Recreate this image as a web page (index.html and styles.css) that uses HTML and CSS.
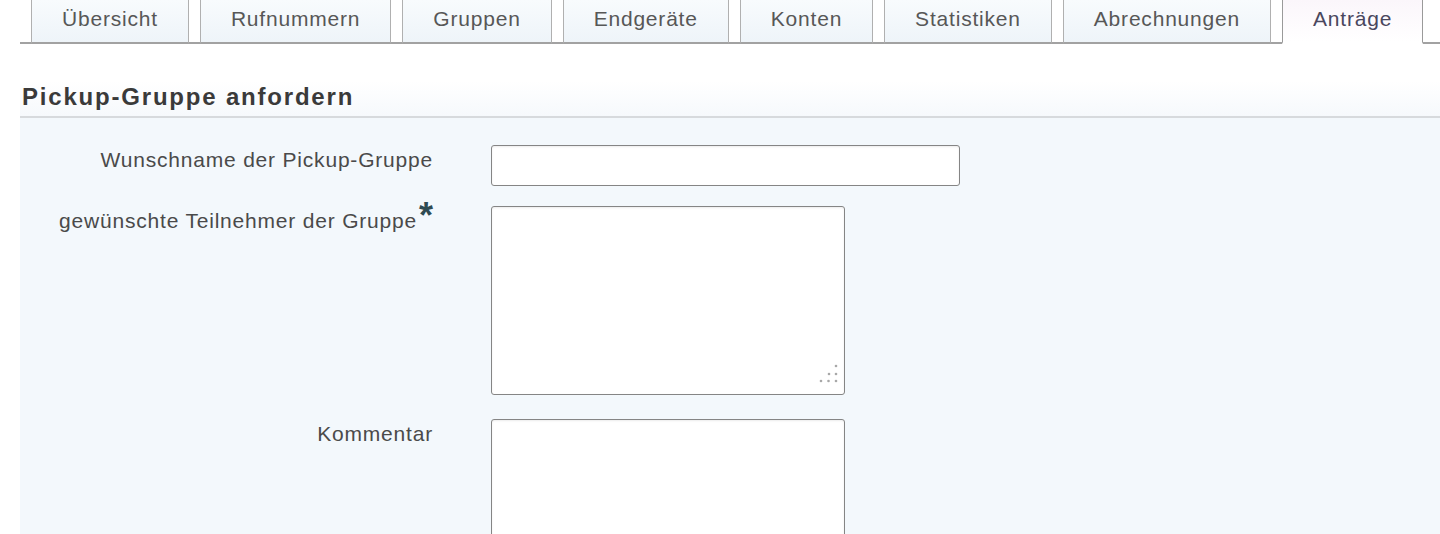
FILE: index.html
```html
<!DOCTYPE html>
<html lang="de">
<head>
<meta charset="utf-8">
<title>Pickup-Gruppe anfordern</title>
<link rel="stylesheet" href="styles.css">
</head>
<body>
<div class="page">
  <ul class="tabs">
    <li class="tab">Übersicht</li>
    <li class="tab">Rufnummern</li>
    <li class="tab">Gruppen</li>
    <li class="tab">Endgeräte</li>
    <li class="tab">Konten</li>
    <li class="tab">Statistiken</li>
    <li class="tab">Abrechnungen</li>
    <li class="tab active">Anträge</li>
  </ul>
  <h2 class="title">Pickup-Gruppe anfordern</h2>
  <form class="panel">
    <div class="grid">
      <label class="label" for="name">Wunschname der Pickup-Gruppe</label>
      <input class="field" id="name" type="text">
      <label class="label" for="members">gewünschte Teilnehmer der Gruppe<span class="req">*</span></label>
      <div class="area-wrap">
        <textarea class="area" id="members"></textarea>
        <svg class="grip" width="24" height="24" viewBox="0 0 24 24" aria-hidden="true">
          <circle cx="20" cy="5" r="1.3"/>
          <circle cx="13" cy="13" r="1.3"/>
          <circle cx="20" cy="13" r="1.3"/>
          <circle cx="5" cy="20" r="1.3"/>
          <circle cx="12.5" cy="20" r="1.3"/>
          <circle cx="20" cy="20" r="1.3"/>
        </svg>
      </div>
      <label class="label" for="comment">Kommentar</label>
      <div class="area-wrap">
        <textarea class="area" id="comment"></textarea>
      </div>
    </div>
  </form>
</div>
</body>
</html>
```
FILE: styles.css
```css
html, body {
  margin: 0;
  padding: 0;
  background: #ffffff;
  font-family: "Liberation Sans", Arial, sans-serif;
}

.page {
  padding-left: 20px;
}

.tabs {
  display: flex;
  gap: 11px;
  margin: 0;
  padding: 0 0 0 11px;
  list-style: none;
  height: 42px;
  border-bottom: 2px solid #a2a2a2;
}

.tab {
  box-sizing: border-box;
  height: 44px;
  margin-bottom: -2px;
  padding: 0 30px;
  border-left: 1px solid #b0b0b0;
  border-right: 1px solid #b0b0b0;
  border-bottom: 2px solid #a2a2a2;
  background: linear-gradient(#f8fbfd, #eef4f9);
  color: #575757;
  font-size: 21px;
  letter-spacing: 0.8px;
  line-height: 38px;
  white-space: nowrap;
}

.tab.active {
  background: linear-gradient(#fbf6fb, #ffffff);
  border-bottom-color: #ffffff;
  border-left-color: #9a9a9a;
  border-right-color: #9a9a9a;
  color: #4a475e;
}

.title {
  margin: 37px 0 0;
  padding: 0 0 4px 2px;
  font-size: 24px;
  font-weight: bold;
  letter-spacing: 1.8px;
  line-height: 31px;
  color: #3a3a3a;
  border-bottom: 2px solid #d7dadd;
  background: linear-gradient(#ffffff, #f6f9fc);
}

.panel {
  margin: 0;
  padding: 27px 0 40px;
  background: #f3f8fc;
}

.grid {
  display: grid;
  grid-template-columns: 413px 1fr;
  column-gap: 58px;
  row-gap: 20px;
  align-items: start;
}

.label {
  padding-top: 3px;
  text-align: right;
  font-size: 21px;
  letter-spacing: 0.8px;
  line-height: 24px;
  color: #4a4a4a;
  white-space: nowrap;
}

.req {
  margin-left: 2px;
  font-size: 36px;
  font-weight: bold;
  line-height: 0;
  color: #2e4b52;
  letter-spacing: 0;
}

.field {
  display: block;
  box-sizing: border-box;
  width: 469px;
  height: 41px;
  margin: 0;
  border: 1px solid #858585;
  border-radius: 3px;
  background: #ffffff;
  box-shadow: inset 0 1px 2px rgba(0, 0, 0, 0.08);
}

.area-wrap {
  position: relative;
  width: 354px;
  margin-bottom: 4px;
}

.area {
  display: block;
  box-sizing: border-box;
  width: 354px;
  height: 189px;
  margin: 0;
  border: 1px solid #858585;
  border-radius: 3px;
  background: #ffffff;
  box-shadow: inset 0 1px 2px rgba(0, 0, 0, 0.08);
  resize: none;
}

.grip {
  position: absolute;
  right: 5px;
  bottom: 10px;
  fill: #a8a8a8;
}
```
